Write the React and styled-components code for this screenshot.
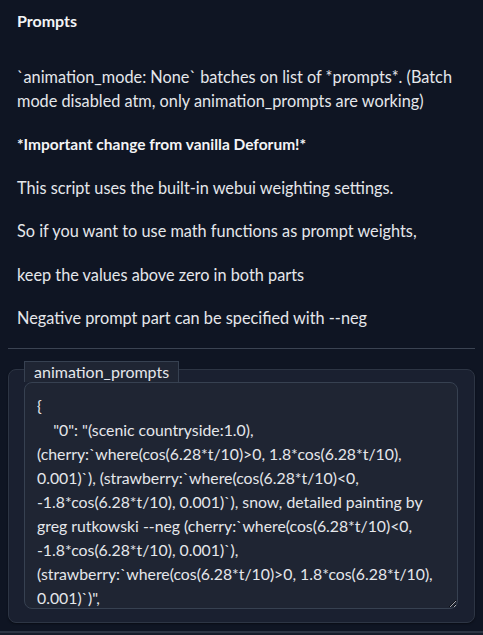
import styled, { createGlobalStyle } from 'styled-components';

const GlobalStyle = createGlobalStyle`
    html, body {
        margin:0;
        padding:0;
        background:#0f1523;
    }
    body {
        font-family:Lato, "Liberation Sans", sans-serif;
        color:#e5e7eb;
    }
`

const promptText = `{
    "0": "(scenic countryside:1.0),
(cherry:\`where(cos(6.28*t/10)>0, 1.8*cos(6.28*t/10),
0.001)\`), (strawberry:\`where(cos(6.28*t/10)<0,
-1.8*cos(6.28*t/10), 0.001)\`), snow, detailed painting by
greg rutkowski --neg (cherry:\`where(cos(6.28*t/10)<0,
-1.8*cos(6.28*t/10), 0.001)\`),
(strawberry:\`where(cos(6.28*t/10)>0, 1.8*cos(6.28*t/10),
0.001)\`)",
    "20": "(scenic countryside:1.0), snow"
}`

export default function App () {
    return(
        <Page>
            <GlobalStyle/>
            <Markdown>
                <Title>Prompts</Title>
                <Paragraph>`animation_mode: None` batches on list of *prompts*. (Batch mode disabled atm, only animation_prompts are working)</Paragraph>
                <Paragraph bold>*Important change from vanilla Deforum!*</Paragraph>
                <Paragraph>This script uses the built-in webui weighting settings.</Paragraph>
                <Paragraph>So if you want to use math functions as prompt weights,</Paragraph>
                <Paragraph>keep the values above zero in both parts</Paragraph>
                <Paragraph>Negative prompt part can be specified with --neg</Paragraph>
            </Markdown>
            <Divider/>
            <Panel>
                <Label>animation_prompts</Label>
                <PromptArea defaultValue={promptText} wrap="off" spellCheck={false}/>
            </Panel>
            <NextBlock/>
        </Page>
    )
}

const Page = styled.div`
    padding:0 8px;
    height:635px;
    overflow:hidden;
`

const Markdown = styled.div`
    padding:9px 9px 0 9px;
    display:flex;
    flex-direction:column;
    gap:19.4px;
`

const Title = styled.div`
    font-size:16px;
    font-weight:700;
    line-height:24px;
    margin-bottom:12.6px;
    color:#f3f4f6;
`

const Paragraph = styled.p`
    margin:0;
    font-size:${props => props.bold ? '15.5px' : '16.3px'};
    line-height:24px;
    font-weight:${props => props.bold ? 700 : 400};
    color:${props => props.bold ? '#f3f4f6' : '#e5e7eb'};
`

const Divider = styled.div`
    margin-top:18px;
    height:1px;
    background:#3b4352;
`

const Panel = styled.div`
    margin-top:20px;
    padding:0 16px 13px 15px;
    background:#1a2030;
    border:1px solid #2d3544;
    border-radius:8px;
    display:flex;
    flex-direction:column;
    align-items:flex-start;
    box-shadow:0 1px 2px rgba(0,0,0,0.4);
`

const Label = styled.span`
    margin-top:-9px;
    padding:0 9px;
    height:21px;
    line-height:20px;
    font-size:16px;
    color:#e5e7eb;
    background:#1f2533;
    border:1px solid #374151;
    border-bottom:none;
    box-sizing:border-box;
`

const PromptArea = styled.textarea`
    width:100%;
    box-sizing:border-box;
    height:227px;
    padding:11px 12px;
    font-family:Lato, "Liberation Sans", sans-serif;
    font-size:15.8px;
    line-height:24px;
    color:#e5e7eb;
    background:#1f2533;
    border:1px solid #374151;
    border-radius:8px;
    overflow:hidden;
    color-scheme:dark;
    outline:none;
    resize:vertical;
`

const NextBlock = styled.div`
    margin-top:8px;
    height:12px;
    margin-left:-8px;
    margin-right:-8px;
    border-top:2px solid #2d3544;
    background:#161c2a;
`
